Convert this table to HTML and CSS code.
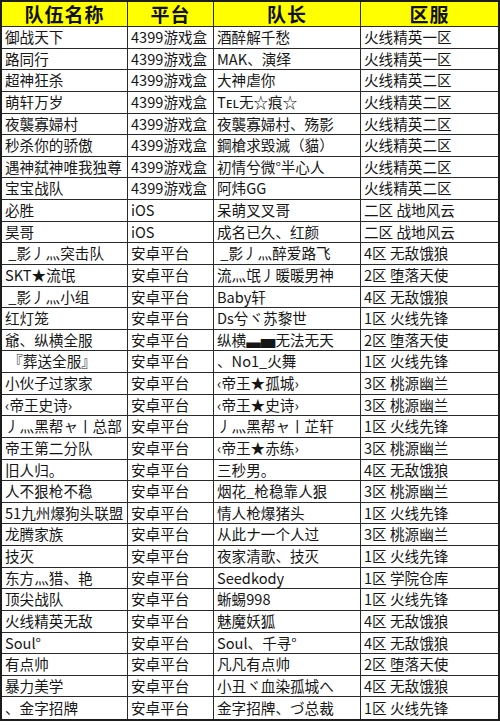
FILE: index.html
```html
<!DOCTYPE html>
<html lang="zh-CN">
<head>
<meta charset="utf-8">
<title>队伍名单</title>
<link rel="stylesheet" href="styles.css">
</head>
<body>
<div class="sheet">
  <div class="c h">队伍名称</div><div class="c h">平台</div><div class="c h">队长</div><div class="c h last">区服</div>

  <div class="c">御战天下</div><div class="c">4399游戏盒</div><div class="c">酒醉解千愁</div><div class="c last">火线精英一区</div>
  <div class="c">路同行</div><div class="c">4399游戏盒</div><div class="c">MAK、演绎</div><div class="c last">火线精英一区</div>
  <div class="c">超神狂杀</div><div class="c">4399游戏盒</div><div class="c">大神虐你</div><div class="c last">火线精英二区</div>
  <div class="c">萌轩万岁</div><div class="c">4399游戏盒</div><div class="c">Tᴇʟ无☆痕☆</div><div class="c last">火线精英二区</div>
  <div class="c">夜襲寡婦村</div><div class="c">4399游戏盒</div><div class="c">夜襲寡婦村、殇影</div><div class="c last">火线精英二区</div>
  <div class="c">秒杀你的骄傲</div><div class="c">4399游戏盒</div><div class="c">鋼槍求毀滅（貓）</div><div class="c last">火线精英二区</div>
  <div class="c">遇神弑神唯我独尊</div><div class="c">4399游戏盒</div><div class="c">初情兮微°半心人</div><div class="c last">火线精英二区</div>
  <div class="c">宝宝战队</div><div class="c">4399游戏盒</div><div class="c">阿炜GG</div><div class="c last">火线精英二区</div>
  <div class="c">必胜</div><div class="c">iOS</div><div class="c">呆萌叉叉哥</div><div class="c last">二区 战地风云</div>
  <div class="c">昊哥</div><div class="c">iOS</div><div class="c">成名已久、红颜</div><div class="c last">二区 战地风云</div>
  <div class="c"> _影丿灬突击队</div><div class="c">安卓平台</div><div class="c"> _影丿灬醉爱路飞</div><div class="c last">4区 无敌饿狼</div>
  <div class="c">SKT★流氓</div><div class="c">安卓平台</div><div class="c">流灬氓丿暖暖男神</div><div class="c last">2区 堕落天使</div>
  <div class="c"> _影丿灬小组</div><div class="c">安卓平台</div><div class="c">Baby轩</div><div class="c last">4区 无敌饿狼</div>
  <div class="c">红灯笼</div><div class="c">安卓平台</div><div class="c">Ds兮ヾ苏黎世</div><div class="c last">1区 火线先锋</div>
  <div class="c">爺、纵横全服</div><div class="c">安卓平台</div><div class="c">纵横▃▅无法无天</div><div class="c last">2区 堕落天使</div>
  <div class="c"> 『葬送全服』</div><div class="c">安卓平台</div><div class="c">、No1_火舞</div><div class="c last">1区 火线先锋</div>
  <div class="c">小伙子过家家</div><div class="c">安卓平台</div><div class="c">‹帝王★孤城›</div><div class="c last">3区 桃源幽兰</div>
  <div class="c">‹帝王史诗›</div><div class="c">安卓平台</div><div class="c">‹帝王★史诗›</div><div class="c last">3区 桃源幽兰</div>
  <div class="c">丿灬黑帮ャ丨总部</div><div class="c">安卓平台</div><div class="c">丿灬黑帮ャ丨芷轩</div><div class="c last">1区 火线先锋</div>
  <div class="c">帝王第二分队</div><div class="c">安卓平台</div><div class="c">‹帝王★赤练›</div><div class="c last">3区 桃源幽兰</div>
  <div class="c">旧人归。</div><div class="c">安卓平台</div><div class="c">三秒男。</div><div class="c last">4区 无敌饿狼</div>
  <div class="c">人不狠枪不稳</div><div class="c">安卓平台</div><div class="c">烟花_枪稳靠人狠</div><div class="c last">3区 桃源幽兰</div>
  <div class="c">51九州爆狗头联盟</div><div class="c">安卓平台</div><div class="c">情人枪爆猪头</div><div class="c last">1区 火线先锋</div>
  <div class="c">龙腾家族</div><div class="c">安卓平台</div><div class="c">从此ナ一个人过</div><div class="c last">3区 桃源幽兰</div>
  <div class="c">技灭</div><div class="c">安卓平台</div><div class="c">夜家清歌、技灭</div><div class="c last">1区 火线先锋</div>
  <div class="c">东方灬猎、艳</div><div class="c">安卓平台</div><div class="c">Seedkody</div><div class="c last">1区 学院仓库</div>
  <div class="c">顶尖战队</div><div class="c">安卓平台</div><div class="c">蜥蜴998</div><div class="c last">1区 火线先锋</div>
  <div class="c">火线精英无敌</div><div class="c">安卓平台</div><div class="c">魅魔妖狐</div><div class="c last">4区 无敌饿狼</div>
  <div class="c">Soul°</div><div class="c">安卓平台</div><div class="c">Soul、千寻°</div><div class="c last">4区 无敌饿狼</div>
  <div class="c">有点帅</div><div class="c">安卓平台</div><div class="c">凡凡有点帅</div><div class="c last">2区 堕落天使</div>
  <div class="c">暴力美学</div><div class="c">安卓平台</div><div class="c">小丑ヾ血染孤城へ</div><div class="c last">4区 无敌饿狼</div>
  <div class="c bot">、金字招牌</div><div class="c bot">安卓平台</div><div class="c bot">金字招牌、づ总裁</div><div class="c bot last">1区 火线先锋</div>
</div>
</body>
</html>
```

FILE: styles.css
```css
html, body {
  margin: 0;
  padding: 0;
  background: #ffffff;
}

.sheet {
  width: 500px;
  box-sizing: border-box;
  border: 2px solid #1c1c1c;
  display: grid;
  grid-template-columns: 126px 86px 147px 137px;
  grid-template-rows: 25px repeat(32, 21.625px);
  font-family: "Noto Sans CJK SC", "Noto Sans", sans-serif;
  font-size: 14.6px;
  color: #161616;
}

.c {
  box-sizing: border-box;
  border-right: 1px solid #2a2a2a;
  border-bottom: 1px solid #2a2a2a;
  padding: 0 0 1px 3px;
  display: flex;
  align-items: center;
  white-space: pre;
  line-height: 1.2;
  min-width: 0;
}

.c.last {
  border-right: none;
}

.c.bot {
  border-bottom: none;
}

.c.h {
  background: #ffff00;
  justify-content: center;
  padding: 0;
  font-weight: 700;
  font-size: 19px;
  line-height: 1.2;
  color: #111111;
  letter-spacing: 1px;
}
```
